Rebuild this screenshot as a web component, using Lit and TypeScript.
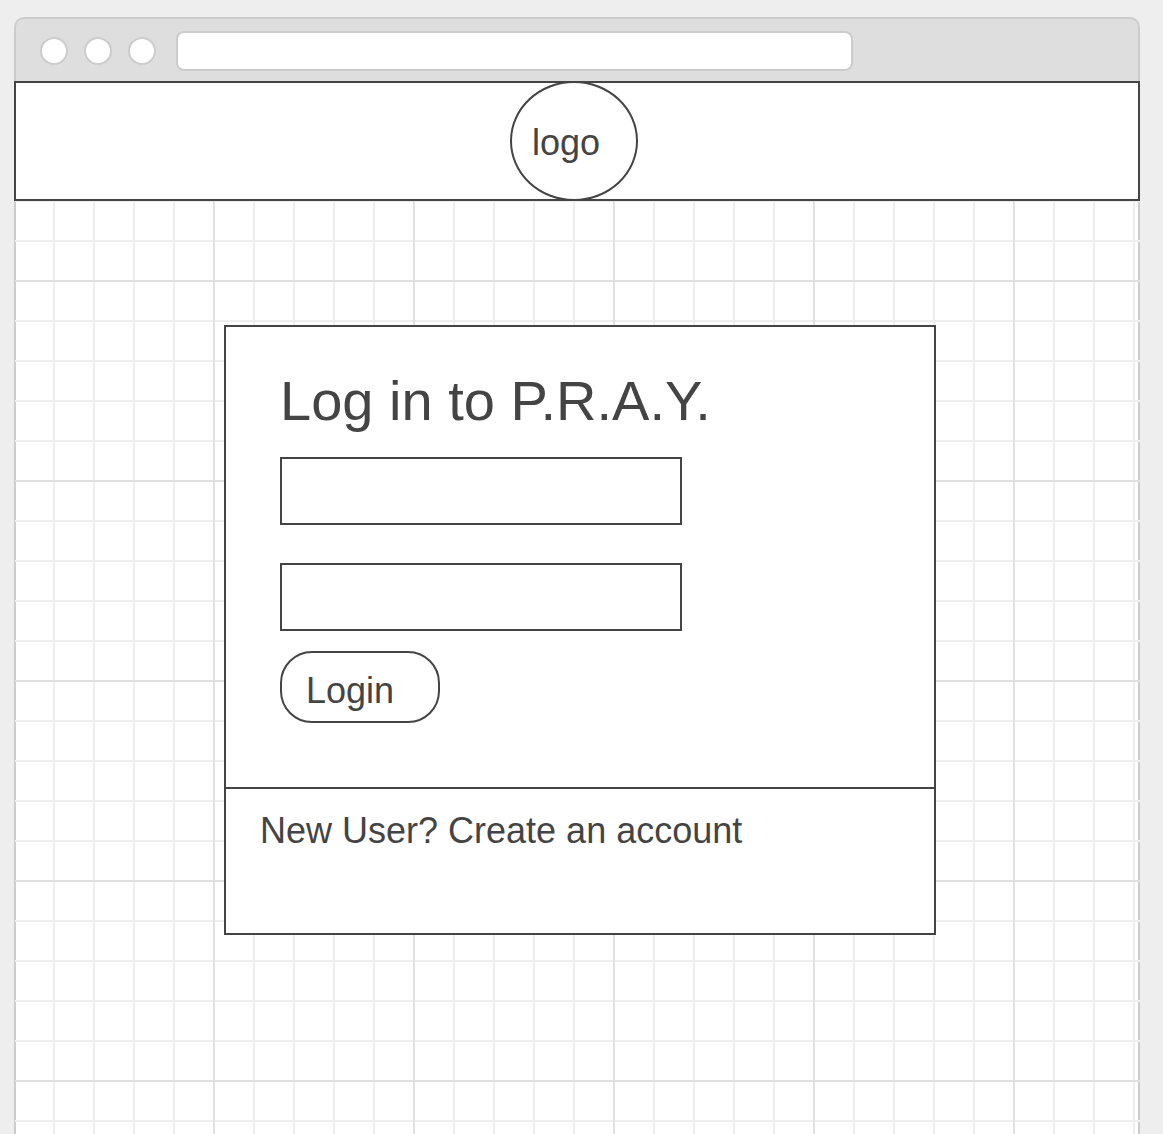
import { LitElement, html, css } from "lit";
import { customElement } from "lit/decorators.js";

@customElement("app-root")
export class AppRoot extends LitElement {
  static styles = css`
    :host {
      --ink: #444;
      --edge: #ccc;
      --line: #eee;
      --major: #e0e0e0;
      display: block;
      box-sizing: border-box;
      min-height: 100vh;
      padding: 17px 23px 0 14px;
      background: #eee;
      color: var(--ink);
      font-family: "Liberation Sans", Arial, sans-serif;
      font-size: 36px;
      line-height: 40px;
    }
    * {
      box-sizing: border-box;
    }
    .window {
      display: flex;
      flex-direction: column;
      min-height: calc(100vh - 17px);
    }
    .chrome {
      display: flex;
      align-items: center;
      gap: 16px;
      padding: 12px 285px 10px 24px;
      background: #dedede;
      border: 2px solid var(--edge);
      border-bottom: 0;
      border-radius: 10px 10px 0 0;
    }
    .dot {
      flex: none;
      width: 28px;
      height: 28px;
      background: #fff;
      border: 2px solid var(--edge);
      border-radius: 50%;
    }
    .address {
      flex: 1;
      min-width: 0;
      height: 40px;
      margin-left: 4px;
      padding: 0 12px;
      background: #fff;
      border: 2px solid var(--edge);
      border-radius: 8px;
      font: inherit;
      font-size: 20px;
      color: inherit;
    }
    .banner {
      display: flex;
      justify-content: center;
      height: 120px;
      padding-right: 6px;
      background: #fff;
      border: 2px solid var(--ink);
    }
    .logo {
      display: flex;
      align-items: center;
      width: 128px;
      margin: -2px 0;
      padding: 4px 0 0 20px;
      border: 2px solid var(--ink);
      border-radius: 50%;
      color: inherit;
      text-decoration: none;
    }
    /* Graph paper: a line every 40px, a stronger one every 200px. */
    .canvas {
      flex: 1;
      display: flex;
      justify-content: center;
      align-items: flex-start;
      padding: 124px 0 124px 6px;
      background-color: #fff;
      background-image:
        linear-gradient(var(--edge), var(--edge)),
        linear-gradient(var(--major) 2px, transparent 2px),
        linear-gradient(90deg, var(--major) 2px, transparent 2px),
        linear-gradient(var(--line) 2px, transparent 2px),
        linear-gradient(var(--edge), var(--edge)),
        linear-gradient(var(--edge), var(--edge)),
        linear-gradient(90deg, var(--line) 2px, transparent 2px);
      background-size:
        1px 100%,
        100% 200px,
        200px 100%,
        100% 40px,
        2px 100%,
        2px 100%,
        40px 100%;
      background-position:
        0 0,
        0 79px,
        199px 0,
        0 39px,
        0 0,
        100% 0,
        39px 0;
      background-repeat: no-repeat, repeat, repeat, repeat, no-repeat, no-repeat, repeat;
    }
    .card {
      width: 712px;
      max-width: 100%;
      background: #fff;
      border: 2px solid var(--ink);
    }
    .form {
      display: flex;
      flex-direction: column;
      align-items: flex-start;
      padding: 42px 54px 64px;
    }
    .title {
      margin: 0 0 24px;
      font-size: 56px;
      font-weight: 400;
      line-height: 64px;
    }
    .field {
      width: 402px;
      max-width: 100%;
      height: 68px;
      margin: 0 0 38px;
      padding: 0 16px;
      background: #fff;
      border: 2px solid var(--ink);
      border-radius: 0;
      font: inherit;
      color: inherit;
    }
    .field.last {
      margin-bottom: 20px;
    }
    .submit {
      width: 160px;
      height: 72px;
      margin: 0;
      padding: 8px 0 0 24px;
      background: #fff;
      border: 2px solid var(--ink);
      border-radius: 32px;
      font: inherit;
      color: inherit;
      text-align: left;
      cursor: pointer;
    }
    .signup {
      padding: 22px 34px 82px;
      border-top: 2px solid var(--ink);
    }
    .signup a {
      color: inherit;
      text-decoration: none;
    }
  `;

  render() {
    return html`
      <div class="window">
        <div class="chrome">
          <span class="dot"></span>
          <span class="dot"></span>
          <span class="dot"></span>
          <input class="address" type="url" aria-label="Address" />
        </div>
        <header class="banner"><a class="logo" href="#">logo</a></header>
        <main class="canvas">
          <section class="card">
            <form class="form" @submit=${(e: Event) => e.preventDefault()}>
              <h1 class="title">Log in to P.R.A.Y.</h1>
              <input class="field" type="text" aria-label="Username" />
              <input class="field last" type="password" aria-label="Password" />
              <button class="submit" type="submit">Login</button>
            </form>
            <div class="signup">New User? <a href="#">Create an account</a></div>
          </section>
        </main>
      </div>
    `;
  }
}
